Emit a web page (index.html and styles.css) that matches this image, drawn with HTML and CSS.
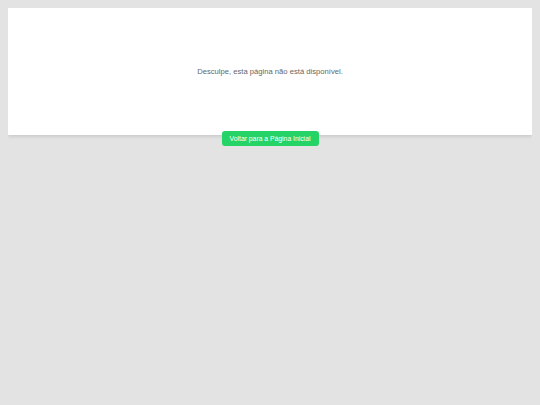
FILE: index.html
```html
<!DOCTYPE html>
<html lang="pt">
<head>
<meta charset="utf-8">
<link rel="stylesheet" href="styles.css">
</head>
<body>
<div class="card">
  <p class="msg">Desculpe, esta página não está disponível.</p>
</div>
<div class="actions">
  <a class="btn" href="#">Voltar para a Página Inicial</a>
</div>
</body>
</html>
```
FILE: styles.css
```css
html, body {
  background: #e3e3e3;
}
body {
  margin: 8px;
  font-family: "Liberation Sans", Arial, sans-serif;
}
.card {
  background: #ffffff;
  height: 127px;
  display: flex;
  align-items: center;
  justify-content: center;
  box-shadow: 0 1px 4px rgba(0,0,0,0.15);
}
.msg {
  margin: 0;
  font-size: 7.65px;
  color: #666666;
}
.actions {
  display: flex;
  justify-content: center;
  margin-top: -4px;
  position: relative;
}
.btn {
  display: flex;
  align-items: center;
  justify-content: center;
  width: 97px;
  height: 15px;
  background: #25d366;
  color: #ffffff;
  border-radius: 3px;
  font-size: 6.8px;
  text-decoration: none;
}
```
